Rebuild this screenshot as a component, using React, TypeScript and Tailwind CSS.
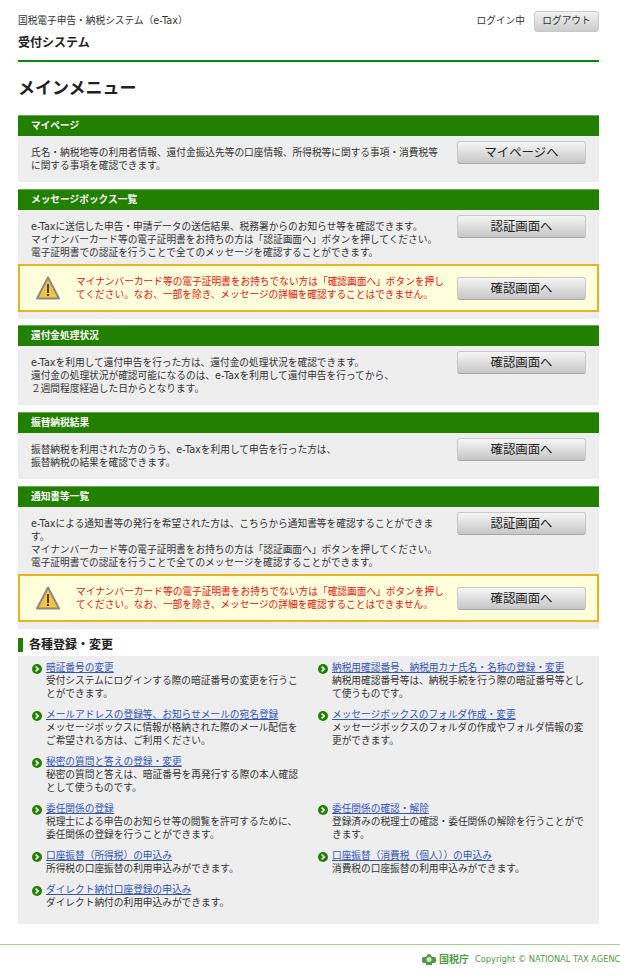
import React from 'react';

const links = [
  [
    { title: '暗証番号の変更', text: '受付システムにログインする際の暗証番号の変更を行うことができます。' },
    { title: '納税用確認番号、納税用カナ氏名・名称の登録・変更', text: '納税用確認番号等は、納税手続を行う際の暗証番号等として使うものです。' },
  ],
  [
    { title: 'メールアドレスの登録等、お知らせメールの宛名登録', text: 'メッセージボックスに情報が格納された際のメール配信をご希望される方は、ご利用ください。' },
    { title: 'メッセージボックスのフォルダ作成・変更', text: 'メッセージボックスのフォルダの作成やフォルダ情報の変更ができます。' },
  ],
  [
    { title: '秘密の質問と答えの登録・変更', text: '秘密の質問と答えは、暗証番号を再発行する際の本人確認として使うものです。' },
    null,
  ],
  [
    { title: '委任関係の登録', text: '税理士による申告のお知らせ等の閲覧を許可するために、委任関係の登録を行うことができます。' },
    { title: '委任関係の確認・解除', text: '登録済みの税理士の確認・委任関係の解除を行うことができます。' },
  ],
  [
    { title: '口座振替（所得税）の申込み', text: '所得税の口座振替の利用申込みができます。' },
    { title: '口座振替（消費税（個人））の申込み', text: '消費税の口座振替の利用申込みができます。' },
  ],
  [
    { title: 'ダイレクト納付口座登録の申込み', text: 'ダイレクト納付の利用申込みができます。' },
    null,
  ],
];

const warningText = 'マイナンバーカード等の電子証明書をお持ちでない方は「確認画面へ」ボタンを押してください。なお、一部を除き、メッセージの詳細を確認することはできません。';

const Btn = ({ label }: { label: string }) => (
  <button className="w-[129px] h-[23px] shrink-0 rounded-[3px] border border-[#c8c8c8] border-b-[#a8a8a8] bg-gradient-to-b from-[#f6f6f6] to-[#c6c6c6] text-[12.4px] leading-[21px] text-[#222] text-center">
    {label}
  </button>
);

const SectionHead = ({ title }: { title: string }) => (
  <h2 className="h-[21px] bg-[#218000] border-t border-[#6fa85a] pl-[13px] text-[9.7px] leading-[19px] font-bold text-white">
    {title}
  </h2>
);

const Warning = () => (
  <div className="flex items-center h-[48px] mt-[7px] border-2 border-[#e6b422] bg-[#ffffdc] pr-[11px]">
    <svg width="24" height="24" viewBox="0 0 24 24" className="ml-[16px] mr-[16px] shrink-0">
      <path d="M12 1.5 L23 22.5 H1 Z" fill="#f7c33c" stroke="#8a8a8a" strokeWidth="2" strokeLinejoin="round" />
      <rect x="11" y="8" width="2" height="9" fill="#444" />
      <rect x="11" y="18" width="2" height="2" fill="#444" />
    </svg>
    <p className="w-[372px] mr-[9px] text-[9.7px] leading-[13px] text-[#f01010]">{warningText}</p>
    <Btn label="確認画面へ" />
  </div>
);

const Section = ({ title, btn, lines, warn, h }: { title: string; btn: string; lines: string[]; warn?: boolean; h: string }) => (
  <section className={warn ? 'mb-[6px]' : 'mb-[7px]'}>
    <SectionHead title={title} />
    <div className={`bg-[#eeeeee] ${warn ? 'pb-[7px]' : ''}`}>
      <div className={`flex justify-between pl-[13px] pr-[13px] pt-[5px] ${h}`}>
        <div className="w-[410px] pt-[5px] text-[9.7px] leading-[13px] text-[#333]">
          {lines.map((l, i) => (
            <p key={i}>{l}</p>
          ))}
        </div>
        <Btn label={btn} />
      </div>
      {warn && <Warning />}
    </div>
  </section>
);

const LinkItem = ({ title, text }: { title: string; text: string }) => (
  <div className="flex">
    <svg width="10" height="10" viewBox="0 0 10 10" className="mt-[3px] mr-[4px] shrink-0">
      <circle cx="5" cy="5" r="5" fill="#218000" />
      <path d="M3.6 2.6 L6.2 5 L3.6 7.4" fill="none" stroke="#fff" strokeWidth="1.6" />
    </svg>
    <div className="text-[9.7px] leading-[13px] text-[#333]">
      <a href="#" className="text-[#3355bb] underline">{title}</a>
      <p>{text}</p>
    </div>
  </div>
);

export default function App() {
  return (
    <div className="w-[620px] h-[980px] overflow-hidden bg-white font-['DejaVu_Sans','Noto_Sans_CJK_JP',sans-serif]">
      <div className="pl-[18px] pr-[21px] pt-[11px]">
        <header className="h-[49px] border-b-2 border-[#0a8a0a] box-content">
          <div className="flex justify-between">
            <p className="pt-[3px] text-[9.7px] leading-[13px] text-[#333]">国税電子申告・納税システム（e-Tax）</p>
            <div className="flex items-center">
              <span className="mr-[9px] text-[9.7px] text-[#333]">ログイン中</span>
              <button className="w-[65px] h-[21px] rounded-[3px] border border-[#c8c8c8] bg-gradient-to-b from-[#f2f2f2] to-[#cccccc] text-[9.7px] text-[#333]">ログアウト</button>
            </div>
          </div>
          <p className="mt-[3px] text-[12px] leading-[16px] font-bold text-[#222]">受付システム</p>
        </header>
        <h1 className="mt-[14px] mb-[15px] text-[17px] leading-[24px] font-bold text-[#222]">メインメニュー</h1>
        <Section title="マイページ" btn="マイページへ" h="h-[46px]" lines={['氏名・納税地等の利用者情報、還付金振込先等の口座情報、所得税等に関する事項・消費税等', 'に関する事項を確認できます。']} />
        <Section title="メッセージボックス一覧" btn="認証画面へ" h="h-[47px]" warn lines={['e-Taxに送信した申告・申請データの送信結果、税務署からのお知らせ等を確認できます。', 'マイナンバーカード等の電子証明書をお持ちの方は「認証画面へ」ボタンを押してください。', '電子証明書での認証を行うことで全てのメッセージを確認することができます。']} />
        <Section title="還付金処理状況" btn="確認画面へ" h="h-[59px]" lines={['e-Taxを利用して還付申告を行った方は、還付金の処理状況を確認できます。', '還付金の処理状況が確認可能になるのは、e-Taxを利用して還付申告を行ってから、', '２週間程度経過した日からとなります。']} />
        <Section title="振替納税結果" btn="確認画面へ" h="h-[46px]" lines={['振替納税を利用された方のうち、e-Taxを利用して申告を行った方は、', '振替納税の結果を確認できます。']} />
        <Section title="通知書等一覧" btn="認証画面へ" h="h-[60px]" warn lines={['e-Taxによる通知書等の発行を希望された方は、こちらから通知書等を確認することができます。', 'マイナンバーカード等の電子証明書をお持ちの方は「認証画面へ」ボタンを押してください。', '電子証明書での認証を行うことで全てのメッセージを確認することができます。']} />
        <h2 className="mt-[9px] mb-[4px] h-[14px] border-l-[5px] border-[#218000] pl-[6px] text-[12px] leading-[15px] font-bold text-[#222]">各種登録・変更</h2>
        <div className="h-[268px] bg-[#eeeeee] px-[14px] pt-[5px]">
          {links.map((row, i) => (
            <div key={i} className="grid grid-cols-[286px_1fr] mb-[8px]">
              {row.map((item, j) => (
                <div key={j} className="w-[270px]">
                  {item && <LinkItem title={item.title} text={item.text} />}
                </div>
              ))}
            </div>
          ))}
        </div>
      </div>
      <footer className="mt-[20px] h-[30px] border-t border-[#9ed68c] flex items-center pl-[421px] whitespace-nowrap">
        <svg width="16" height="11" viewBox="0 0 16 11" className="shrink-0 mr-[2px]">
          <path d="M1 4 Q3 2 5 3 Q6 0 8 0 Q10 0 11 3 Q13 2 15 4 Q16 7 14 9 L11 9 L11 11 L5 11 L5 9 L2 9 Q0 7 1 4 Z" fill="#4f9a43" />
          <circle cx="8" cy="5.5" r="2.5" fill="#cfe6c8" />
        </svg>
        <span className="mr-[6px] text-[10px] font-bold text-[#4f9a43]">国税庁</span>
        <span className="text-[8.25px] text-[#4f9a43]">Copyright © NATIONAL TAX AGENCY ALL RIGHTS RESERVED.</span>
      </footer>
    </div>
  );
}
